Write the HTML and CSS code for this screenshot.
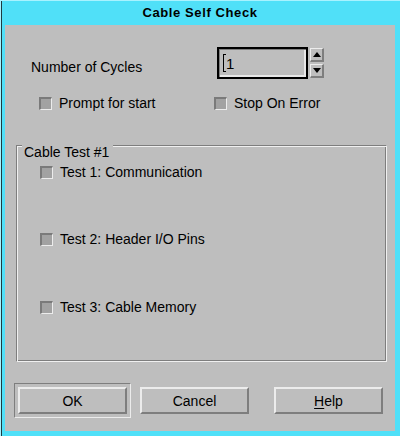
FILE: index.html
```html
<!DOCTYPE html>
<html>
<head>
<meta charset="utf-8">
<title>Cable Self Check</title>
<link rel="stylesheet" href="styles.css">
</head>
<body>
<div class="window">
  <div class="titlebar"><span class="title">Cable Self Check</span></div>
  <div class="client">
    <div class="cycles-row">
      <span class="cycles-label">Number of Cycles</span>
      <div class="spin">
        <div class="field"><span class="cursor"></span><span class="value">1</span></div>
        <div class="arrows">
          <div class="arrow"><svg width="8" height="5" viewBox="0 0 8 5"><polygon points="4,0 8,5 0,5" fill="#000"/></svg></div>
          <div class="arrow"><svg width="8" height="5" viewBox="0 0 8 5"><polygon points="0,0 8,0 4,5" fill="#000"/></svg></div>
        </div>
      </div>
    </div>
    <div class="options-row">
      <label class="check first"><span class="box"></span><span>Prompt for start</span></label>
      <label class="check"><span class="box"></span><span>Stop On Error</span></label>
    </div>
    <div class="group">
      <div class="legend">Cable Test #1</div>
      <label class="check test t1"><span class="box"></span><span>Test 1: Communication</span></label>
      <label class="check test t2"><span class="box"></span><span>Test 2: Header I/O Pins</span></label>
      <label class="check test t3"><span class="box"></span><span>Test 3: Cable Memory</span></label>
    </div>
    <div class="buttons">
      <div class="default-frame"><div class="btn">OK</div></div>
      <div class="btn cancel">Cancel</div>
      <div class="btn help"><span class="mnemonic">H</span>elp</div>
    </div>
  </div>
</div>
</body>
</html>
```
FILE: styles.css
```css
* { box-sizing: border-box; }
html, body { margin: 0; padding: 0; }
body {
  width: 400px;
  height: 436px;
  overflow: hidden;
  background: #50e0f8;
  font-family: "Liberation Sans", Arial, sans-serif;
  font-size: 14px;
  color: #000;
}
.window {
  width: 400px;
  height: 436px;
  background: #50e0f8;
  display: flex;
  flex-direction: column;
  padding: 0 5px 5px 5px;
  box-shadow: inset 1px 1px 0 #a8f2ff, inset 2px 0 0 #1e3a40;
}
.titlebar {
  height: 25px;
  line-height: 25px;
  text-align: center;
  flex: none;
}
.title {
  font-weight: bold;
  font-size: 13px;
  letter-spacing: 0.6px;
}
.client {
  flex: 1;
  background: #bebebe;
  padding-top: 22px;
  display: flex;
  flex-direction: column;
}
.cycles-row {
  display: flex;
  align-items: flex-start;
}
.cycles-label {
  width: 186px;
  margin-left: 26px;
  margin-top: 12px;
  line-height: 16px;
}
.spin {
  display: flex;
  gap: 2px;
}
.field {
  width: 91px;
  height: 32px;
  border: 2px solid #000;
  background: #bebebe;
  box-shadow: inset 1px 1px 0 #7e7e7e, inset -2px -2px 0 #e8e8e8;
  display: flex;
  align-items: center;
  padding-left: 4px;
  font-size: 15px;
}
.cursor {
  width: 3px;
  height: 18px;
  border-left: 1px solid #000;
  border-top: 1px solid #000;
  border-bottom: 1px solid #000;
}
.arrows {
  display: flex;
  flex-direction: column;
  gap: 2px;
  padding-top: 1px;
}
.arrow {
  width: 14px;
  height: 14px;
  border-style: solid;
  border-width: 1px 2px 2px 1px;
  border-color: #ececec #7e7e7e #7e7e7e #ececec;
  display: flex;
  align-items: center;
  justify-content: center;
}
.arrow svg { display: block; }
.options-row {
  display: flex;
  margin-top: 16px;
  line-height: 16px;
}
.check {
  display: flex;
  align-items: center;
  gap: 7px;
  line-height: 16px;
}
.check.first {
  margin-left: 34px;
  width: 175px;
}
.box {
  width: 13px;
  height: 13px;
  flex: none;
  background: #a2a2a2;
  border-style: solid;
  border-width: 2px 1px 1px 2px;
  border-color: #7a7a7a #ececec #ececec #7a7a7a;
}
.group {
  margin: 34px 8px 0 11px;
  height: 217px;
  border-style: solid;
  border-width: 1px;
  border-color: #7e7e7e #f0f0f0 #f0f0f0 #7e7e7e;
  box-shadow: inset 1px 1px 0 #f0f0f0, inset -1px -1px 0 #7e7e7e;
  display: flex;
  flex-direction: column;
  align-items: flex-start;
}
.legend {
  margin-top: -2px;
  margin-left: 5px;
  padding: 0 4px 0 2px;
  background: #bebebe;
  line-height: 16px;
}
.check.test { margin-left: 23px; }
.t1 { margin-top: 4px; }
.t2 { margin-top: 51px; }
.t3 { margin-top: 52px; }
.buttons {
  display: flex;
  align-items: center;
  margin-top: 21px;
  margin-left: 9px;
}
.default-frame {
  width: 117px;
  height: 35px;
  border-style: solid;
  border-width: 1px;
  border-color: #7e7e7e #ececec #ececec #7e7e7e;
  padding: 3px;
}
.btn {
  width: 109px;
  height: 27px;
  border-style: solid;
  border-width: 2px;
  border-color: #ececec #7e7e7e #7e7e7e #ececec;
  display: flex;
  align-items: center;
  justify-content: center;
  line-height: 16px;
}
.cancel { margin-left: 9px; }
.help { margin-left: 25px; }
.mnemonic { text-decoration: underline; text-underline-offset: 2px; }
```
